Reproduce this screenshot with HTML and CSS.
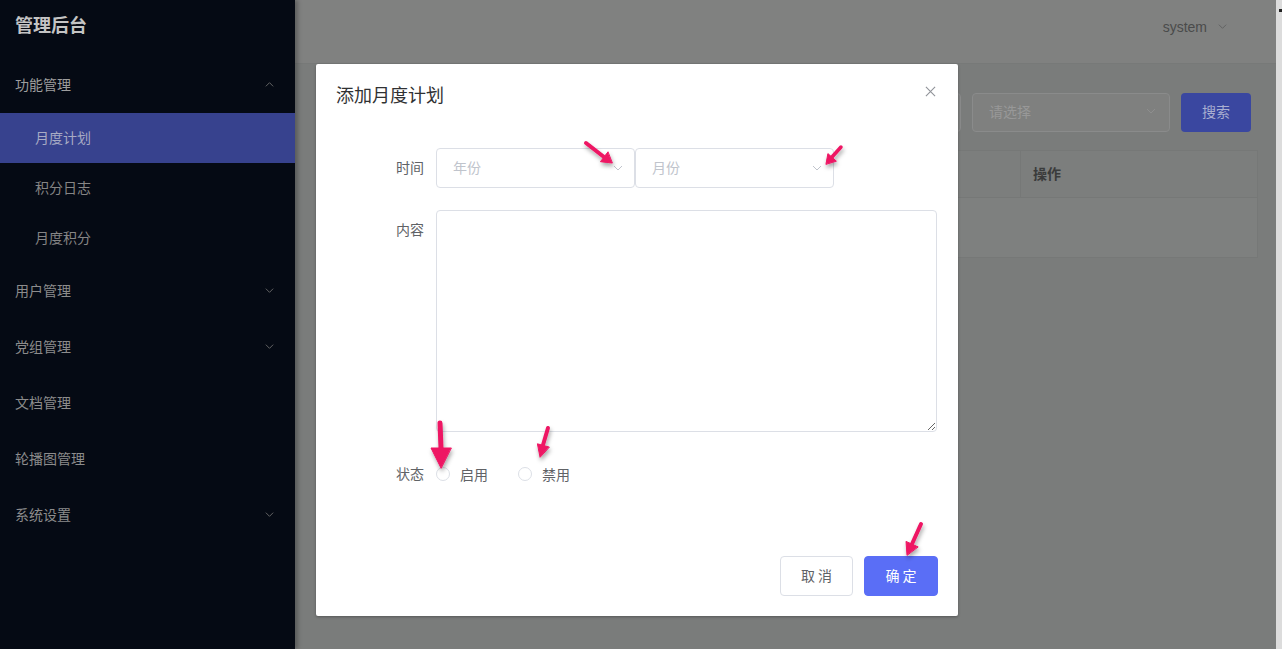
FILE: index.html
```html
<!DOCTYPE html>
<html lang="zh-CN">
<head>
<meta charset="utf-8">
<title>管理后台</title>
<link rel="stylesheet" href="styles.css">
</head>
<body>
<div class="app">
  <aside class="sidebar">
    <div class="logo">管理后台</div>
    <ul class="menu">
      <li class="group">
        <div class="group-title"><span>功能管理</span><svg class="chev" viewBox="0 0 12 12"><path d="M2 8 L6 4 L10 8"/></svg></div>
        <ul class="sub">
          <li class="active">月度计划</li>
          <li>积分日志</li>
          <li>月度积分</li>
        </ul>
      </li>
      <li class="group"><div class="group-title"><span>用户管理</span><svg class="chev" viewBox="0 0 12 12"><path d="M2 4 L6 8 L10 4"/></svg></div></li>
      <li class="group"><div class="group-title"><span>党组管理</span><svg class="chev" viewBox="0 0 12 12"><path d="M2 4 L6 8 L10 4"/></svg></div></li>
      <li class="group"><div class="group-title"><span>文档管理</span></div></li>
      <li class="group"><div class="group-title"><span>轮播图管理</span></div></li>
      <li class="group"><div class="group-title"><span>系统设置</span><svg class="chev" viewBox="0 0 12 12"><path d="M2 4 L6 8 L10 4"/></svg></div></li>
    </ul>
  </aside>

  <main class="main">
    <header class="topbar">
      <span class="user">system</span>
      <svg class="chev chev-user" viewBox="0 0 12 12"><path d="M2 4 L6 8 L10 4"/></svg>
    </header>
    <section class="content">
      <div class="toolbar">
        <div class="btn-add"></div>
        <div class="field field-input"></div>
        <div class="field field-select"><span>请选择</span><svg class="chev" viewBox="0 0 12 12"><path d="M2 4 L6 8 L10 4"/></svg></div>
        <div class="btn-search">搜索</div>
      </div>
      <div class="table">
        <div class="thead">
          <div class="th th-main"></div>
          <div class="th th-op">操作</div>
        </div>
        <div class="tbody"></div>
      </div>
    </section>
  </main>

  <div class="scrollbar"><span class="scroll-mark"></span></div>
</div>

<div class="dialog">
  <div class="dialog-header">
    <span class="dialog-title">添加月度计划</span>
    <svg class="dialog-close" viewBox="0 0 12 12"><path d="M1 1 L11 11 M11 1 L1 11"/></svg>
  </div>
  <div class="dialog-body">
    <div class="form-row">
      <label class="form-label">时间</label>
      <div class="form-control">
        <div class="select"><span>年份</span><svg class="chev" viewBox="0 0 12 12"><path d="M2 4 L6 8 L10 4"/></svg></div>
        <div class="select"><span>月份</span><svg class="chev" viewBox="0 0 12 12"><path d="M2 4 L6 8 L10 4"/></svg></div>
      </div>
    </div>
    <div class="form-row row-top">
      <label class="form-label">内容</label>
      <div class="form-control">
        <textarea class="textarea"></textarea>
      </div>
    </div>
    <div class="form-row">
      <label class="form-label">状态</label>
      <div class="form-control radios">
        <span class="radio"><span class="radio-dot"></span><span>启用</span></span>
        <span class="radio"><span class="radio-dot"></span><span>禁用</span></span>
      </div>
    </div>
  </div>
  <div class="dialog-footer">
    <button class="btn btn-cancel">取 消</button>
    <button class="btn btn-ok">确 定</button>
  </div>
</div>

<svg class="annotations" width="1282" height="649" viewBox="0 0 1282 649">
  <defs>
    <filter id="sh" x="-50%" y="-50%" width="200%" height="200%">
      <feDropShadow dx="1" dy="3" stdDeviation="2" flood-color="#000" flood-opacity="0.35"/>
    </filter>
  </defs>
  <g filter="url(#sh)" fill="#ee1463" stroke="#ee1463" stroke-linecap="round" stroke-linejoin="round">
    <line x1="586" y1="143" x2="604" y2="157" stroke-width="4"/>
    <polygon points="612,163 600.4,161.7 607.8,152.1"/>
    <line x1="841" y1="147" x2="832" y2="157" stroke-width="3.5"/>
    <polygon points="826,164 827.9,153.6 836.1,160.9"/>
    <line x1="440" y1="423" x2="441" y2="448" stroke-width="5"/>
    <polygon points="441,468 431,448 451,448"/>
    <line x1="548" y1="428" x2="543" y2="445" stroke-width="4"/>
    <polygon points="540,457 537.4,443.8 549,447"/>
    <line x1="921" y1="524" x2="912" y2="544" stroke-width="4"/>
    <polygon points="907,555 906,541.4 917.8,546.8"/>
  </g>
</svg>
</body>
</html>
```

FILE: styles.css
```css
* { box-sizing: border-box; }
html, body { margin: 0; padding: 0; }
body {
  width: 1282px;
  height: 649px;
  overflow: hidden;
  font-family: "Noto Sans CJK SC", "Liberation Sans", sans-serif;
  font-size: 14px;
  position: relative;
}
ul { list-style: none; margin: 0; padding: 0; }

.app { display: flex; height: 649px; }

/* sidebar */
.sidebar {
  width: 295px;
  flex: 0 0 295px;
  background: #050a14;
  box-shadow: 3px 0 4px rgba(0,0,0,0.25);
  position: relative;
  z-index: 1;
}
.logo {
  height: 57px;
  padding: 0 15px 9px;
  display: flex;
  align-items: center;
  color: #c4c4c4;
  font-size: 18px;
  font-weight: bold;
}
.group-title {
  height: 56px;
  padding: 0 20px 2px 15px;
  display: flex;
  align-items: center;
  justify-content: space-between;
  color: #8c8c8c;
}
.group:first-child .group-title { color: #9e9e9e; }
.chev { width: 12px; height: 12px; fill: none; stroke: currentColor; stroke-width: 1; }
.group-title .chev { color: #6a6a6a; width: 11px; height: 11px; }
.sub li {
  height: 50px;
  padding: 0 0 2px 35px;
  display: flex;
  align-items: center;
  color: #858585;
}
.sub li.active { background: #37428e; color: #a7abc4; }

/* main */
.main {
  flex: 1;
  display: flex;
  flex-direction: column;
  background: #7a7c7b;
}
.topbar {
  height: 64px;
  flex: 0 0 64px;
  background: #808180;
  border-bottom: 1px solid #777978;
  display: flex;
  align-items: center;
  justify-content: flex-end;
  padding: 0 48px 10px 0;
  gap: 8px;
}
.user { font-family: "Liberation Sans", sans-serif; font-size: 14px; color: #4a4b4b; }
.chev-user { color: #5f6060; width: 11px; height: 11px; margin-left: 2px; }

.content { padding: 28px 18px 0 21px; }
.toolbar { display: flex; align-items: center; gap: 11px; height: 40px; margin-right: 7px; }
.btn-add {
  width: 80px; height: 38px; border-radius: 4px;
  background: #3a4594;
  margin-right: auto;
}
.field {
  height: 39px;
  border: 1px solid #8a8b8b;
  border-radius: 4px;
  background: #7f807f;
}
.field-input { width: 200px; }
.field-select {
  width: 198px;
  display: flex; align-items: center; justify-content: space-between;
  padding: 0 12px 2px 16px;
  color: #989898;
}
.field-select .chev { color: #8e8e8e; }
.btn-search {
  width: 70px; height: 39px; border-radius: 4px;
  background: #3a47a0; color: #a9aed0;
  display: flex; align-items: center; justify-content: center;
  padding-bottom: 2px;
}

.table {
  margin-top: 18px;
  border: 1px solid #767877;
  background: #7e807f;
}
.thead { display: flex; height: 47px; border-bottom: 1px solid #767877; background: #7c7e7d; }
.th { display: flex; align-items: center; }
.th-main { flex: 1; border-right: 1px solid #767877; }
.th-op { width: 236px; padding: 0 0 3px 12px; font-weight: bold; color: #3a3b3b; }
.tbody { height: 59px; }

.scrollbar { width: 6px; flex: 0 0 6px; background: #dcdcdc; position: relative; }
.scroll-mark { position: absolute; top: 9px; right: 0; width: 3px; height: 3px; background: #222; }

/* dialog */
.dialog {
  position: absolute;
  left: 316px;
  top: 64px;
  width: 642px;
  height: 552px;
  background: #fff;
  border-radius: 2px;
  box-shadow: 0 1px 3px rgba(0,0,0,0.3);
  display: flex;
  flex-direction: column;
  z-index: 2;
}
.dialog-header {
  padding: 18px 20px 12px;
  display: flex;
  align-items: center;
  justify-content: space-between;
  height: 54px;
}
.dialog-title { font-size: 18px; line-height: 24px; color: #303133; }
.dialog-close { width: 11px; height: 11px; stroke: #909399; stroke-width: 1.2; fill: none; margin: -6px 2px 0 0; }
.dialog-body { padding: 30px 20px 30px; }
.form-row { display: flex; align-items: center; margin-bottom: 22px; }
.form-row:last-child { margin-bottom: 0; }
.form-row.row-top { align-items: flex-start; }
.form-label {
  width: 100px;
  padding: 0 12px 2px 0;
  text-align: right;
  color: #606266;
  line-height: 38px;
}
.form-control { display: flex; align-items: center; min-height: 40px; }
.select {
  width: 199px;
  height: 40px;
  border: 1px solid #dcdfe6;
  border-radius: 4px;
  display: flex;
  align-items: center;
  justify-content: space-between;
  padding: 0 10px 2px 16px;
  color: #c0c4cc;
}
.select .chev { color: #c0c4cc; margin-top: 2px; }
.textarea {
  display: block;
  width: 501px;
  height: 222px;
  border: 1px solid #dcdfe6;
  border-radius: 4px;
  resize: vertical;
  padding: 5px 15px;
  font-family: inherit;
  font-size: 14px;
}
.radios { gap: 30px; }
.radio { display: flex; align-items: center; gap: 10px; color: #606266; line-height: 18px; padding-bottom: 1px; }
.radio-dot {
  width: 14px; height: 14px;
  border: 1px solid #dcdfe6;
  border-radius: 50%;
  background: #fff;
  margin-top: 1px;
}
.dialog-footer {
  margin-top: auto;
  padding: 10px 20px 20px;
  display: flex;
  justify-content: flex-end;
  gap: 11px;
}
.btn {
  width: 73px;
  height: 40px;
  border-radius: 4px;
  font-family: inherit;
  font-size: 14px;
  padding: 0 0 2px;
}
.btn-cancel { background: #fff; border: 1px solid #dcdfe6; color: #606266; }
.btn-ok { background: #5a6ef6; border: 1px solid #5a6ef6; color: #fff; width: 74px; }

.annotations { position: absolute; left: 0; top: 0; z-index: 3; pointer-events: none; }
```
